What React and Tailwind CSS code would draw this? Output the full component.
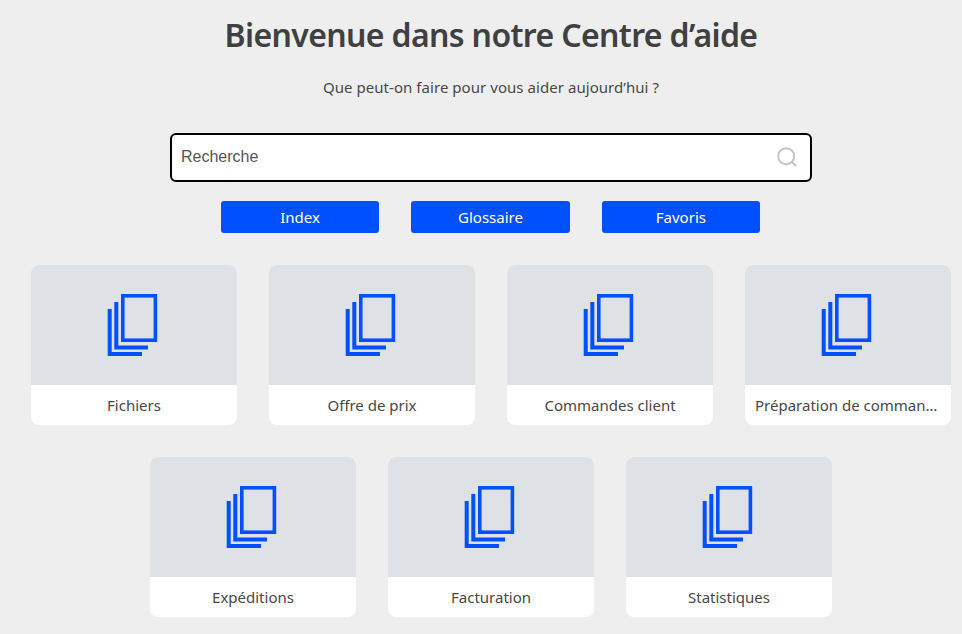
import React from 'react';

const categories = [
  'Fichiers',
  'Offre de prix',
  'Commandes client',
  'Préparation de commandes',
  'Expéditions',
  'Facturation',
  'Statistiques',
];

function PagesIcon() {
  return (
    <svg width="51" height="62" viewBox="0 0 51 62" fill="none" stroke="#0050ff" strokeWidth="4">
      <rect x="15.8" y="1.8" width="32.6" height="44.4" strokeWidth="3.6" />
      <path d="M9.3 8 V53.5 H41" />
      <path d="M2.7 15 V60 H35" />
    </svg>
  );
}

function SearchIcon() {
  return (
    <svg width="20" height="20" viewBox="0 0 20 20" fill="none" stroke="#c4c4c4" strokeWidth="2" strokeLinecap="round">
      <circle cx="9.2" cy="9.2" r="8" />
      <path d="M15.2 15.2 L18.6 18.6" />
    </svg>
  );
}

function App() {
  return (
    <div className="h-[634px] overflow-hidden bg-[#eeeeee] pl-5 font-['Noto_Sans',sans-serif] text-[#484848]">
      <h1 className="pt-[13px] text-center text-[32px] leading-[44px] font-semibold tracking-[-0.64px] text-[#404040]">
        Bienvenue dans notre Centre d’aide
      </h1>
      <p className="mt-[18px] text-center text-[15px] leading-[24px] tracking-[0.05px]">
        Que peut-on faire pour vous aider aujourd’hui ?
      </p>

      {/* Search */}
      <div className="mx-auto mt-[34px] flex h-[49px] w-[642px] items-center justify-between rounded-md border-2 border-black bg-white pr-[13px] pb-[2px] pl-[9px]">
        <span className="font-['Liberation_Sans',sans-serif] text-base text-[#555555]">Recherche</span>
        <SearchIcon />
      </div>

      <div className="mt-[19px] flex justify-center gap-8 pr-px">
        {['Index', 'Glossaire', 'Favoris'].map((label) => (
          <button
            key={label}
            className="h-8 w-[158.4px] rounded-[3px] bg-[#0050ff] text-[15px] text-white"
          >
            {label}
          </button>
        ))}
      </div>

      {/* Categories */}
      <div className="mt-8 flex flex-wrap justify-center gap-8">
        {categories.map((name) => (
          <div key={name} className="w-[206px] overflow-hidden rounded-lg bg-white">
            <div className="flex h-[120px] items-center justify-center bg-[#dee1e5] pr-[3px]">
              <PagesIcon />
            </div>
            <div className="h-10 truncate px-[10px] text-center text-[15px] leading-[41px]">{name}</div>
          </div>
        ))}
      </div>
    </div>
  );
}

export default App;
